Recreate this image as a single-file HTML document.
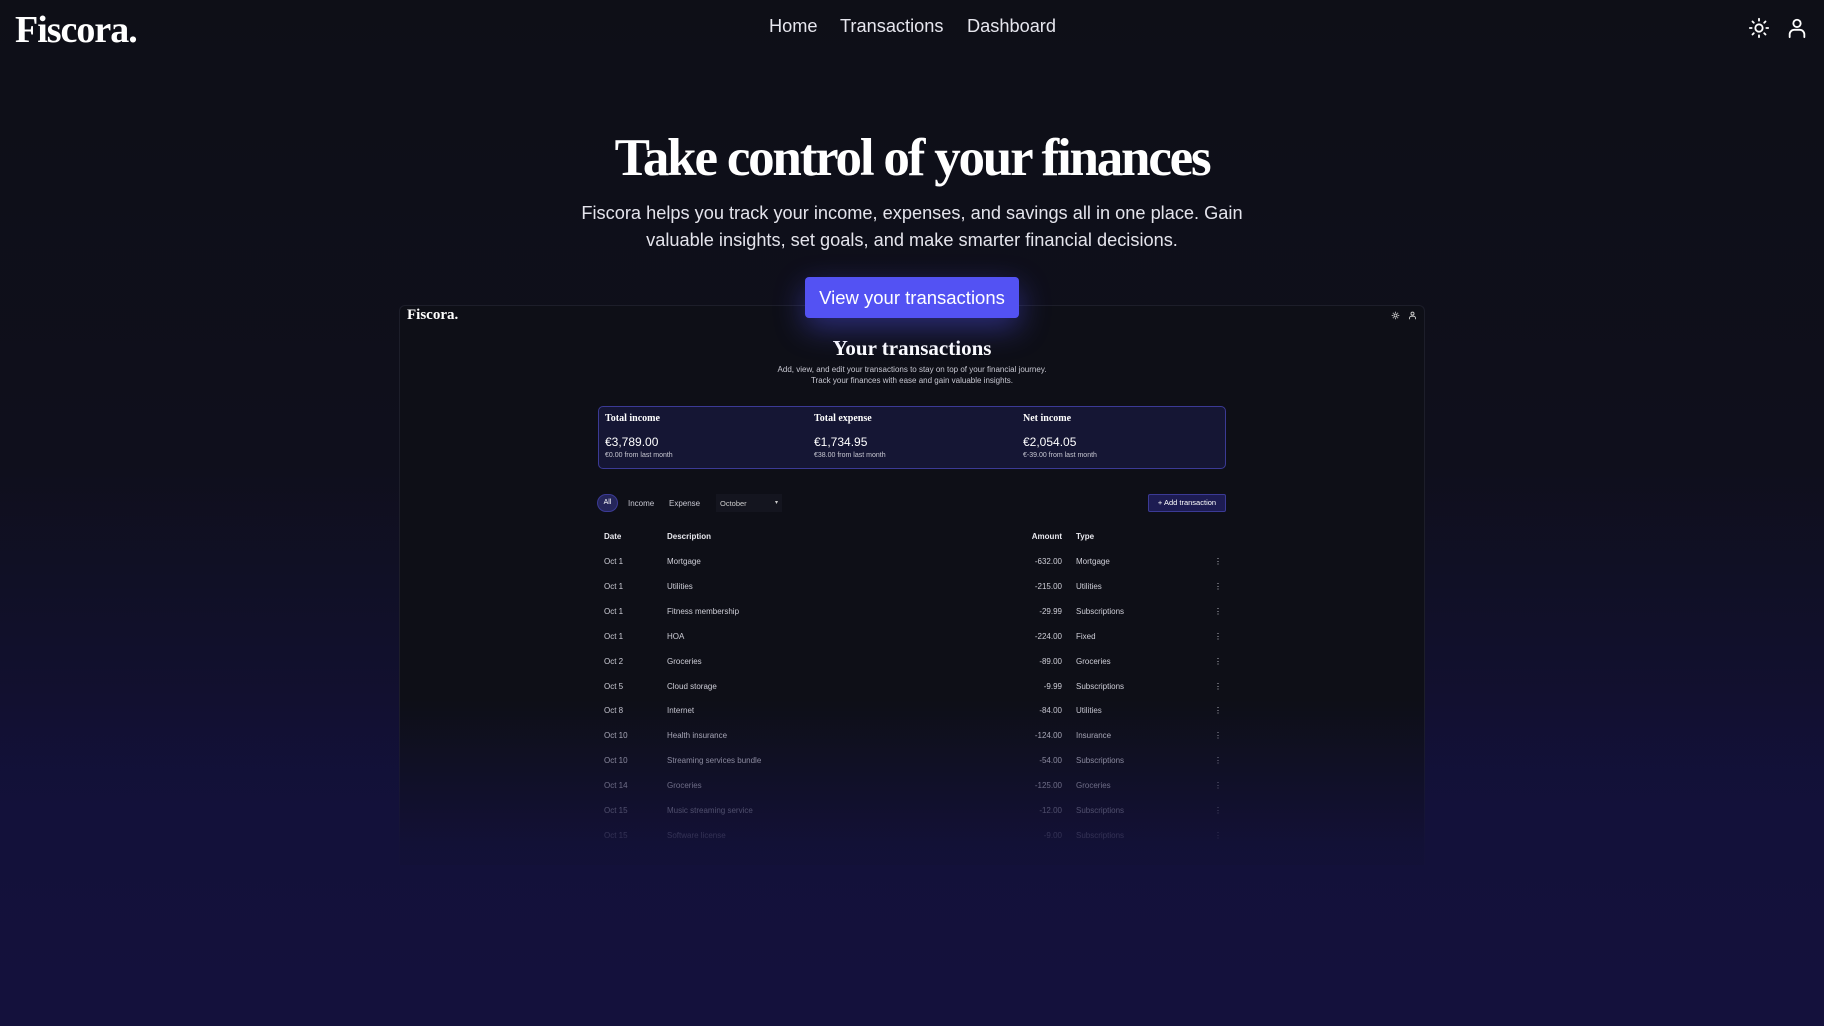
<!DOCTYPE html>
<html><head><meta charset="utf-8"><style>
*{margin:0;padding:0;box-sizing:border-box}
html,body{width:1824px;height:1026px;overflow:hidden}
body{background:linear-gradient(180deg,#0e0f17 0%,#0f0f1c 45%,#13113a 80%,#15123f 100%);font-family:"Liberation Sans",sans-serif;color:#fff;position:relative}
.serif{font-family:"Liberation Serif",serif;font-weight:bold}
.abs{position:absolute}
.logo{left:15px;top:8px;font-size:38px;letter-spacing:-1px}
.nav{top:16px;font-size:18.2px;color:#e6e6ee}
h1{position:absolute;left:0;width:1824px;text-align:center;top:128px;font-size:53px;letter-spacing:-2.2px}
.p{left:0;width:1824px;text-align:center;top:200px;font-size:18.2px;line-height:27px;color:#e4e4ec}
.btn{left:805px;top:277px;width:214px;height:41px;background:#5352f3;border-radius:4px;font-size:18.5px;text-align:center;line-height:41px;box-shadow:0 10px 30px rgba(80,80,240,.45);z-index:3}
.frame{left:399px;top:305px;width:1026px;height:560px;border:1px solid #1d1e2a;border-bottom:none;border-radius:6px 6px 0 0;background:#0e0f17}
.fade{left:0;top:700px;width:1824px;height:326px;background:linear-gradient(180deg,rgba(18,16,50,0) 0%,rgba(19,17,58,.9) 45%,#14113c 100%);z-index:2}
.s{font-size:8px;color:#c8c8d2}
.card{left:598px;top:406px;width:628px;height:63px;border:1px solid #3b3a95;border-radius:5px;background:#151634}
.row{position:absolute;left:0;width:1824px;font-size:8px;color:#cfcfd8}
.row span{position:absolute}
</style></head><body>
<div class="abs serif logo">Fiscora.</div>
<div class="abs nav" style="left:769px">Home</div>
<div class="abs nav" style="left:840px">Transactions</div>
<div class="abs nav" style="left:967px">Dashboard</div>
<svg class="abs" style="left:1748px;top:17px" width="22" height="22" viewBox="0 0 24 24" fill="none" stroke="#fff" stroke-width="2" stroke-linecap="round"><circle cx="12" cy="12" r="4"/><path d="M12 2v2M12 20v2M4.9 4.9l1.4 1.4M17.7 17.7l1.4 1.4M2 12h2M20 12h2M4.9 19.1l1.4-1.4M17.7 6.3l1.4-1.4"/></svg>
<svg class="abs" style="left:1786px;top:17px" width="22" height="22" viewBox="0 0 24 24" fill="none" stroke="#fff" stroke-width="2" stroke-linecap="round"><circle cx="12" cy="7" r="4"/><path d="M4 22v-3a5 5 0 0 1 5-5h6a5 5 0 0 1 5 5v3"/></svg>
<h1 class="serif">Take control of your finances</h1>
<div class="abs p">Fiscora helps you track your income, expenses, and savings all in one place. Gain<br>valuable insights, set goals, and make smarter financial decisions.</div>
<div class="abs btn">View your transactions</div>
<div class="abs frame"></div>
<div class="abs serif" style="left:407px;top:307px;font-size:15px">Fiscora.</div>
<svg class="abs" style="left:1391px;top:311px" width="9" height="9" viewBox="0 0 24 24" fill="none" stroke="#ccc" stroke-width="2.5"><circle cx="12" cy="12" r="4"/><path d="M12 2v3M12 19v3M2 12h3M19 12h3M5 5l2 2M17 17l2 2M5 19l2-2M17 7l2-2"/></svg>
<svg class="abs" style="left:1408px;top:311px" width="9" height="9" viewBox="0 0 24 24" fill="none" stroke="#ccc" stroke-width="2.5"><circle cx="12" cy="7" r="4"/><path d="M4 22v-3a5 5 0 0 1 5-5h6a5 5 0 0 1 5 5v3"/></svg>
<div class="abs serif" style="left:0;width:1824px;text-align:center;top:336px;font-size:21px">Your transactions</div>
<div class="abs s" style="left:0;width:1824px;text-align:center;top:364px;line-height:11px">Add, view, and edit your transactions to stay on top of your financial journey.<br>Track your finances with ease and gain valuable insights.</div>
<div class="abs card"></div>
<div class="abs serif" style="left:605px;top:413px;font-size:10px">Total income</div>
<div class="abs serif" style="left:814px;top:413px;font-size:10px">Total expense</div>
<div class="abs serif" style="left:1023px;top:413px;font-size:10px">Net income</div>
<div class="abs" style="left:605px;top:435px;font-size:12px">€3,789.00</div>
<div class="abs" style="left:814px;top:435px;font-size:12px">€1,734.95</div>
<div class="abs" style="left:1023px;top:435px;font-size:12px">€2,054.05</div>
<div class="abs s" style="left:605px;top:452px;font-size:7px">€0.00 from last month</div>
<div class="abs s" style="left:814px;top:452px;font-size:7px">€38.00 from last month</div>
<div class="abs s" style="left:1023px;top:452px;font-size:7px">€-39.00 from last month</div>
<div class="abs" style="left:597px;top:494px;width:21px;height:18px;border-radius:9px;background:#25265a;border:1px solid #3b3a95;font-size:7px;text-align:center;line-height:16px">All</div>
<div class="abs s" style="left:628px;top:499px">Income</div>
<div class="abs s" style="left:669px;top:499px">Expense</div>
<div class="abs" style="left:716px;top:494px;width:66px;height:18px;background:#14151f;font-size:7.5px;color:#ccc;padding:5px 4px">October<span style="float:right;font-size:6px">▾</span></div>
<div class="abs" style="left:1148px;top:494px;width:78px;height:18px;background:#1d1c52;border:1px solid #3b3a95;border-radius:2px;font-size:7.5px;text-align:center;line-height:16px">+ Add transaction</div>
<div class="row" style="top:532px;font-weight:bold;color:#e8e8ee"><span style="left:604px">Date</span><span style="left:667px">Description</span><span style="left:1000px;width:62px;text-align:right">Amount</span><span style="left:1076px">Type</span></div>
<div class="row" style="top:557px"><span style="left:604px">Oct 1</span><span style="left:667px">Mortgage</span><span style="left:1000px;width:62px;text-align:right">-632.00</span><span style="left:1076px">Mortgage</span><span style="left:1214px">⋮</span></div>
<div class="row" style="top:582px"><span style="left:604px">Oct 1</span><span style="left:667px">Utilities</span><span style="left:1000px;width:62px;text-align:right">-215.00</span><span style="left:1076px">Utilities</span><span style="left:1214px">⋮</span></div>
<div class="row" style="top:607px"><span style="left:604px">Oct 1</span><span style="left:667px">Fitness membership</span><span style="left:1000px;width:62px;text-align:right">-29.99</span><span style="left:1076px">Subscriptions</span><span style="left:1214px">⋮</span></div>
<div class="row" style="top:632px"><span style="left:604px">Oct 1</span><span style="left:667px">HOA</span><span style="left:1000px;width:62px;text-align:right">-224.00</span><span style="left:1076px">Fixed</span><span style="left:1214px">⋮</span></div>
<div class="row" style="top:657px"><span style="left:604px">Oct 2</span><span style="left:667px">Groceries</span><span style="left:1000px;width:62px;text-align:right">-89.00</span><span style="left:1076px">Groceries</span><span style="left:1214px">⋮</span></div>
<div class="row" style="top:682px"><span style="left:604px">Oct 5</span><span style="left:667px">Cloud storage</span><span style="left:1000px;width:62px;text-align:right">-9.99</span><span style="left:1076px">Subscriptions</span><span style="left:1214px">⋮</span></div>
<div class="row" style="top:706px"><span style="left:604px">Oct 8</span><span style="left:667px">Internet</span><span style="left:1000px;width:62px;text-align:right">-84.00</span><span style="left:1076px">Utilities</span><span style="left:1214px">⋮</span></div>
<div class="row" style="top:731px"><span style="left:604px">Oct 10</span><span style="left:667px">Health insurance</span><span style="left:1000px;width:62px;text-align:right">-124.00</span><span style="left:1076px">Insurance</span><span style="left:1214px">⋮</span></div>
<div class="row" style="top:756px"><span style="left:604px">Oct 10</span><span style="left:667px">Streaming services bundle</span><span style="left:1000px;width:62px;text-align:right">-54.00</span><span style="left:1076px">Subscriptions</span><span style="left:1214px">⋮</span></div>
<div class="row" style="top:781px"><span style="left:604px">Oct 14</span><span style="left:667px">Groceries</span><span style="left:1000px;width:62px;text-align:right">-125.00</span><span style="left:1076px">Groceries</span><span style="left:1214px">⋮</span></div>
<div class="row" style="top:806px"><span style="left:604px">Oct 15</span><span style="left:667px">Music streaming service</span><span style="left:1000px;width:62px;text-align:right">-12.00</span><span style="left:1076px">Subscriptions</span><span style="left:1214px">⋮</span></div>
<div class="row" style="top:831px"><span style="left:604px">Oct 15</span><span style="left:667px">Software license</span><span style="left:1000px;width:62px;text-align:right">-9.00</span><span style="left:1076px">Subscriptions</span><span style="left:1214px">⋮</span></div>
<div class="abs fade"></div>
</body></html>
